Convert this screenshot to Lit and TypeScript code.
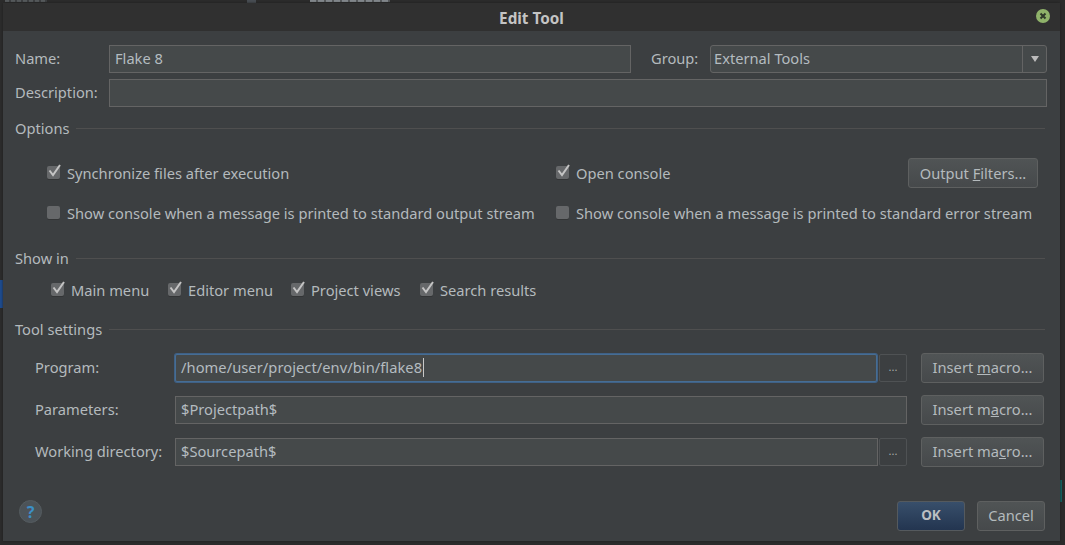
import { LitElement, html, css, nothing } from 'lit'
import { customElement } from 'lit/decorators.js'

// one mnemonic letter per label, underlined like Swing does it
const mnemonic = (before: string, letter: string, after: string) =>
  html`<span>${before}<u>${letter}</u>${after}</span>`

@customElement('app-root')
export class AppRoot extends LitElement {
  static styles = css`
    :host {
      display: block;
      position: relative;
      width: 1065px;
      height: 545px;
      overflow: hidden;
      background: #2b2b2b;
      font-family: 'Noto Sans', sans-serif;
      font-size: 14.667px;
      color: #b4babd;
    }

    /* bits of the IDE window showing round the dialog */
    .behind {
      position: absolute;
      top: 0;
      height: 2px;
      background: repeating-linear-gradient(90deg, #80858a 0 6px, #55585a 6px 8px);
    }
    .behind.left {
      left: 5px;
      width: 42px;
      background: repeating-linear-gradient(90deg, #54585a 0 4px, #3c3e40 4px 6px);
    }
    .behind.tab {
      left: 247px;
      width: 9px;
      height: 3px;
      background: #474c52;
    }
    .behind.right {
      left: 310px;
      width: 80px;
    }
    .selection {
      position: absolute;
      left: 0;
      top: 280px;
      width: 3px;
      height: 28px;
      background: #1d4a8c;
    }
    .teal {
      position: absolute;
      left: 1060px;
      top: 480px;
      width: 3px;
      height: 22px;
      border-left: 2px solid #14615f;
    }

    .dialog {
      position: absolute;
      left: 3px;
      top: 3px;
      width: 1057px;
      height: 538px;
      background: #3c3f41;
      box-shadow: 0 0 2px #1c1c1c;
      display: flex;
      flex-direction: column;
      border-radius: 2px 2px 0 0;
    }

    .title {
      box-sizing: border-box;
      height: 28px;
      flex: none;
      background: #303030;
      display: flex;
      align-items: center;
      justify-content: center;
      padding-top: 2px;
      font-weight: 700;
      font-size: 15.3px;
      color: #c4c4c4;
      position: relative;
    }
    .close {
      position: absolute;
      right: 10px;
      top: 6px;
      width: 14px;
      height: 14px;
      display: block;
    }

    .body {
      flex: 1;
      display: flex;
      flex-direction: column;
      padding: 14px 13px 0 12px;
    }

    .row {
      display: flex;
      align-items: center;
    }
    .label {
      flex: none;
      position: relative;
      top: -1px;
    }
    .field {
      box-sizing: border-box;
      height: 28px;
      display: flex;
      align-items: center;
      padding: 0 0 2px 5px;
      background: #45494a;
      border: 1px solid #646464;
      color: #b4bcc0;
      white-space: pre;
    }
    .field.focus {
      border: 1px solid #466d94;
      box-shadow: 0 0 0 1px #3f6186;
      border-radius: 2px;
    }
    .caret {
      display: inline-block;
      width: 1px;
      height: 19px;
      margin-left: 1px;
      background: #c8c8c8;
    }

    .name-row {
      height: 28px;
    }
    .name-row .label {
      width: 94px;
    }
    .name-row .name {
      width: 522px;
    }
    .name-row .group-label {
      margin-left: 20px;
      width: 59px;
    }
    .combo {
      box-sizing: border-box;
      width: 337px;
      height: 28px;
      display: flex;
      background: #45494a;
      border: 1px solid #646464;
      border-radius: 3px;
      color: #b4bcc0;
    }
    .combo .value {
      flex: 1;
      display: flex;
      align-items: center;
      padding: 0 0 2px 3px;
    }
    .combo .arrow {
      width: 23px;
      border-left: 1px solid #646464;
      display: flex;
      align-items: center;
      justify-content: center;
    }
    .tri {
      width: 0;
      height: 0;
      border-left: 4px solid transparent;
      border-right: 4px solid transparent;
      border-top: 6px solid #bcbcbc;
    }
    .desc-row {
      margin-top: 6px;
    }
    .desc-row .label {
      width: 94px;
    }
    .desc-row .field {
      width: 938px;
    }

    .section {
      display: flex;
      align-items: center;
      gap: 7px;
      height: 20px;
      padding-right: 2px;
    }
    .section::after {
      content: '';
      flex: 1;
      height: 1px;
      background: #4f4f4f;
    }

    .options {
      margin-top: 11px;
    }
    .opt-grid {
      display: grid;
      grid-template-columns: 509px 1fr;
      padding-left: 32px;
      margin-top: 20px;
      row-gap: 15px;
    }
    .opt-line {
      display: flex;
      align-items: center;
      justify-content: space-between;
      height: 30px;
      padding-right: 9px;
    }

    .check {
      display: inline-flex;
      align-items: center;
      gap: 7px;
      white-space: nowrap;
    }
    .box {
      position: relative;
      top: -1px;
      width: 13px;
      height: 13px;
      flex: none;
      background: #66686a;
      border-radius: 2px;
      box-shadow: 0 1px 0 #333536;
    }
    .box svg {
      position: absolute;
      left: 1px;
      top: -3px;
      width: 14px;
      height: 15px;
    }

    .show-in {
      margin-top: 25px;
    }
    .show-row {
      display: flex;
      padding-left: 36px;
      margin-top: 11px;
      height: 22px;
      align-items: center;
    }
    .show-row .check {
      width: 117px;
    }
    .show-row .check:nth-child(2) {
      width: 123px;
    }
    .show-row .check:nth-child(3) {
      width: 129px;
    }

    .tools {
      margin-top: 18px;
    }
    .tool-rows {
      display: flex;
      flex-direction: column;
      gap: 14px;
      margin-top: 15px;
    }
    .tool-row {
      display: flex;
      align-items: center;
      height: 28px;
      padding: 0 3px 0 20px;
    }
    .tool-row .label {
      width: 140px;
    }
    .tool-row .field {
      flex: none;
    }
    .program {
      width: 702px;
      letter-spacing: 0.06px;
    }
    .params {
      width: 732px;
    }
    .workdir {
      width: 703px;
    }
    .browse {
      box-sizing: border-box;
      width: 28px;
      height: 28px;
      margin-left: auto;
      border: 1px solid #4f5254;
      border-radius: 2px;
      display: flex;
      align-items: center;
      justify-content: center;
      font-size: 11px;
      color: #aaa;
      padding-bottom: 4px;
    }

    .btn {
      box-sizing: border-box;
      height: 30px;
      display: flex;
      align-items: center;
      justify-content: center;
      padding-bottom: 1px;
      background: linear-gradient(#505455, #46494b);
      border: 1px solid #5e6060;
      border-radius: 3px;
      color: #b4babd;
      white-space: pre;
    }
    .output {
      width: 130px;
    }
    .macro {
      flex: none;
      width: 123px;
      margin-left: 14px;
      padding-bottom: 3px;
    }

    .footer {
      display: flex;
      align-items: center;
      margin-top: auto;
      padding: 0 2px 10px 4px;
    }
    .help {
      width: 23px;
      height: 23px;
      box-sizing: border-box;
      border-radius: 50%;
      background: #4c5358;
      border: 1px solid #555c60;
      color: #3c8fc6;
      font-weight: 700;
      font-size: 16px;
      display: flex;
      align-items: center;
      justify-content: center;
      margin-bottom: 8px;
    }
    .spacer {
      flex: 1;
    }
    .ok {
      width: 68px;
      font-weight: 700;
      font-size: 13.5px;
      background: linear-gradient(#384f6b, #233550);
      border-color: #555a5e;
      color: #bbbfc2;
    }
    .cancel {
      width: 68px;
      margin-left: 12px;
    }
  `

  private check(label: unknown, checked: boolean) {
    return html`<span class="check">
      <span class="box">
        ${checked
          ? html`<svg viewBox="0 0 14 15">
              <path d="M1.5 7.5 L5 12 L12 2" fill="none" stroke="#c4c4c4" stroke-width="2" />
            </svg>`
          : nothing}
      </span>
      <span>${label}</span>
    </span>`
  }

  render() {
    return html`
      <div class="behind left"></div>
      <div class="behind tab"></div>
      <div class="behind right"></div>
      <div class="selection"></div>
      <div class="teal"></div>

      <div class="dialog">
        <div class="title">
          Edit Tool
          <svg class="close" viewBox="0 0 14 14">
            <circle cx="7" cy="7" r="7" fill="#8fb26a" />
            <path d="M4.5 4.5 L9.5 9.5 M9.5 4.5 L4.5 9.5" stroke="#2f3a2a" stroke-width="2" />
          </svg>
        </div>

        <div class="body">
          <div class="row name-row">
            <span class="label">Name:</span>
            <div class="field name">Flake 8</div>
            <span class="label group-label">Group:</span>
            <div class="combo">
              <div class="value">External Tools</div>
              <div class="arrow"><span class="tri"></span></div>
            </div>
          </div>
          <div class="row desc-row">
            <span class="label">Description:</span>
            <div class="field"></div>
          </div>

          <div class="section options">Options</div>
          <div class="opt-grid">
            <div class="opt-line">${this.check('Synchronize files after execution', true)}</div>
            <div class="opt-line">
              ${this.check('Open console', true)}
              <div class="btn output">${mnemonic('Output ', 'F', 'ilters...')}</div>
            </div>
            ${this.check('Show console when a message is printed to standard output stream', false)}
            ${this.check('Show console when a message is printed to standard error stream', false)}
          </div>

          <div class="section show-in">Show in</div>
          <div class="show-row">
            ${this.check('Main menu', true)} ${this.check('Editor menu', true)}
            ${this.check('Project views', true)} ${this.check('Search results', true)}
          </div>

          <div class="section tools">Tool settings</div>
          <div class="tool-rows">
            <div class="tool-row">
              <span class="label">Program:</span>
              <div class="field focus program">/home/user/project/env/bin/flake8<span class="caret"></span></div>
              <div class="browse">...</div>
              <div class="btn macro">${mnemonic('Insert ', 'm', 'acro...')}</div>
            </div>
            <div class="tool-row">
              <span class="label">Parameters:</span>
              <div class="field params">$Projectpath$</div>
              <div class="btn macro">${mnemonic('Insert m', 'a', 'cro...')}</div>
            </div>
            <div class="tool-row">
              <span class="label">Working directory:</span>
              <div class="field workdir">$Sourcepath$</div>
              <div class="browse">...</div>
              <div class="btn macro">${mnemonic('Insert ma', 'c', 'ro...')}</div>
            </div>
          </div>

          <div class="footer">
            <div class="help">?</div>
            <div class="spacer"></div>
            <div class="btn ok">OK</div>
            <div class="btn cancel">Cancel</div>
          </div>
        </div>
      </div>
    `
  }
}
